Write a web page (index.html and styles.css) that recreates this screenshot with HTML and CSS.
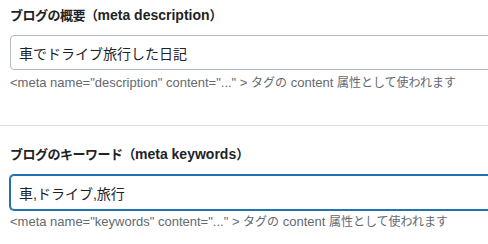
FILE: index.html
```html
<!DOCTYPE html>
<html lang="ja">
<head>
<meta charset="utf-8">
<link rel="stylesheet" href="styles.css">
</head>
<body>
<div class="page">
  <section class="field">
    <label class="field-label" for="desc"><span class="ja">ブログの概要（</span>meta description<span class="ja">）</span></label>
    <input class="field-input" id="desc" type="text" value="車でドライブ旅行した日記">
    <p class="field-help">&lt;meta name="description" content="..." &gt; <span class="ja">タグの</span> content <span class="ja">属性として使われます</span></p>
  </section>
  <hr class="divider">
  <section class="field field-second">
    <label class="field-label" for="kw"><span class="ja">ブログのキーワード（</span>meta keywords<span class="ja">）</span></label>
    <input class="field-input is-focused" id="kw" type="text" value="車,ドライブ,旅行">
    <p class="field-help">&lt;meta name="keywords" content="..." &gt; <span class="ja">タグの</span> content <span class="ja">属性として使われます</span></p>
  </section>
</div>
</body>
</html>
```

FILE: styles.css
```css
html, body {
  margin: 0;
  padding: 0;
  background: #ffffff;
  overflow: hidden;
}
body {
  font-family: "Liberation Sans", "Noto Sans CJK JP", sans-serif;
  color: #1d2327;
}
.page {
  width: 488px;
  height: 244px;
  overflow: hidden;
}
.field {
  display: flex;
  flex-direction: column;
  align-items: flex-start;
  padding: 5px 0 0 10px;
}
.field-second {
  padding-top: 18px;
}
.field-label {
  font-size: 14px;
  font-weight: 700;
  line-height: 20px;
  height: 20px;
  color: #1d2327;
  white-space: nowrap;
}
.field-label .ja {
  font-size: 13px;
  letter-spacing: -0.5px;
}
.field-input {
  box-sizing: border-box;
  margin: 10px 0 0 0;
  width: 520px;
  height: 35px;
  padding: 0 8px;
  border: 1px solid #b5bcc2;
  border-radius: 4px;
  font-family: "Liberation Sans", "Noto Sans CJK JP", sans-serif;
  font-size: 14px;
  color: #1d2327;
  background: #fff;
  outline: none;
}
.field-second .field-input {
  margin-top: 11px;
}
.field-input.is-focused {
  border-color: #2271b1;
  box-shadow: 0 0 0 1px #2271b1;
}
.field-help {
  margin: 4px 0 0 0;
  font-size: 13px;
  line-height: 18px;
  color: #646970;
  white-space: nowrap;
}
.field-second .field-help {
  margin-top: 3px;
}
.field-help .ja {
  font-size: 12px;
}
.divider {
  margin: 33px 0 0 0;
  border: 0;
  border-top: 1px solid #dcdcde;
  height: 0;
}
```
